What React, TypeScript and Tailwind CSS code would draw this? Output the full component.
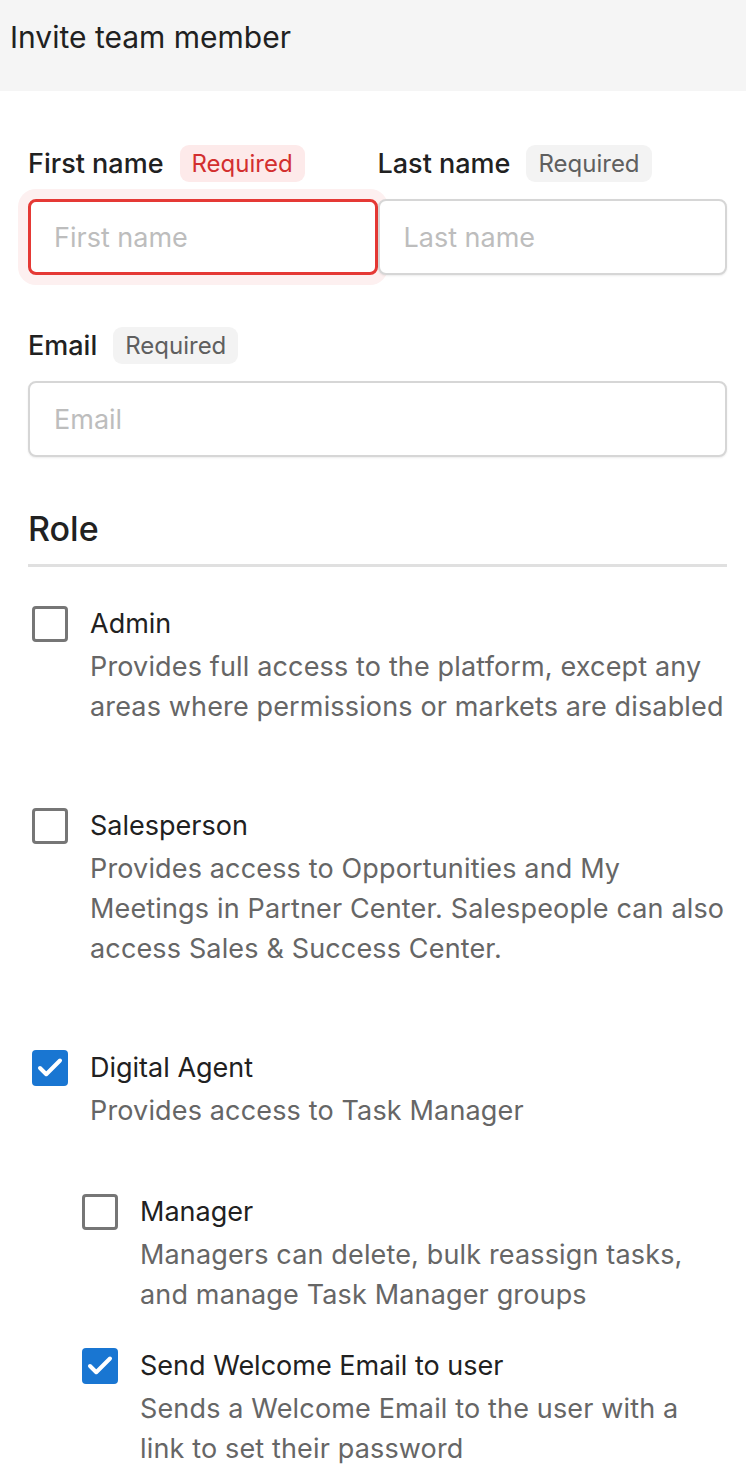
import { Check } from "lucide-react";

type RoleItemProps = {
  title: string;
  description: string;
  checked?: boolean;
};

const Checkbox = ({ checked }: { checked?: boolean }) =>
  checked ? (
    <span className="mt-[2px] flex size-[36px] shrink-0 items-center justify-center rounded-[4px] bg-[#1976d2]">
      <Check className="size-[30px] text-white" strokeWidth={3.2} />
    </span>
  ) : (
    <span className="mt-[2px] size-[36px] shrink-0 rounded-[4px] border-[3px] border-[#767676] bg-white" />
  );

const RoleItem = ({ title, description, checked }: RoleItemProps) => (
  <div className="flex items-start gap-[22px]">
    <Checkbox checked={checked} />
    <div className="flex flex-col">
      <span className="text-[27px] leading-[40px] text-[#212121]">{title}</span>
      <p className="mt-[3px] text-[27px] leading-[40px] tracking-[0.15px] text-[#666666]">
        {description}
      </p>
    </div>
  </div>
);

const Badge = ({ danger }: { danger?: boolean }) => (
  <span
    className={`flex h-[37px] items-center rounded-[9px] px-[12px] text-[24px] leading-none ${
      danger ? "bg-[#fdeaea] text-[#d32f2f]" : "bg-[#f3f3f3] text-[#5f5f5f]"
    }`}
  >
    Required
  </span>
);

const Field = ({
  label,
  placeholder,
  error,
}: {
  label: string;
  placeholder: string;
  error?: boolean;
}) => (
  <div className="flex flex-col gap-[17px]">
    <div className="flex h-[37px] items-center gap-[16px]">
      <span className="text-[27px] font-medium leading-none text-[#212121]">
        {label}
      </span>
      <Badge danger={error} />
    </div>
    <input
      placeholder={placeholder}
      className={`h-[76px] w-full rounded-[8px] bg-white text-[27px] text-[#212121] outline-none placeholder:text-[#bdbdbd] ${
        error
          ? "border-[3px] border-[#e53935] px-[23px] ring-[10px] ring-[#fdf0f0]"
          : "border-2 border-[#d6d6d6] px-[24px] shadow-[0_1px_2px_rgba(0,0,0,0.08)]"
      }`}
    />
  </div>
);

export default function App() {
  return (
    <div className="min-h-[1472px] bg-white font-['Inter','Noto_Sans',sans-serif]">
      <header className="flex h-[91px] items-start bg-[#f5f5f5] px-[10px] pt-[17px]">
        <h1 className="text-[30px] leading-[40px] text-[#212121]">
          Invite team member
        </h1>
      </header>

      <div className="px-[28px] pt-[54px] pr-[19px]">
        <div className="grid grid-cols-2">
          <Field label="First name" placeholder="First name" error />
          <Field label="Last name" placeholder="Last name" />
        </div>

        <div className="mt-[52px]">
          <Field label="Email" placeholder="Email" />
        </div>

        <h2 className="mt-[50px] text-[34px] font-medium leading-[44px] text-[#212121]">
          Role
        </h2>
        <div className="mt-[13px] h-[3px] bg-[#e0e0e0]" />

        <div className="flex flex-col gap-[79px] pt-[37px] pl-[4px]">
          <RoleItem
            title="Admin"
            description="Provides full access to the platform, except any areas where permissions or markets are disabled"
          />
          <RoleItem
            title="Salesperson"
            description="Provides access to Opportunities and My Meetings in Partner Center. Salespeople can also access Sales & Success Center."
          />
          <div className="flex flex-col gap-[61px]">
            <RoleItem
              title="Digital Agent"
              description="Provides access to Task Manager"
              checked
            />
            <div className="flex flex-col gap-[31px] pl-[50px]">
              <RoleItem
                title="Manager"
                description="Managers can delete, bulk reassign tasks, and manage Task Manager groups"
              />
              <RoleItem
                title="Send Welcome Email to user"
                description="Sends a Welcome Email to the user with a link to set their password"
                checked
              />
            </div>
          </div>
        </div>
      </div>
    </div>
  );
}
